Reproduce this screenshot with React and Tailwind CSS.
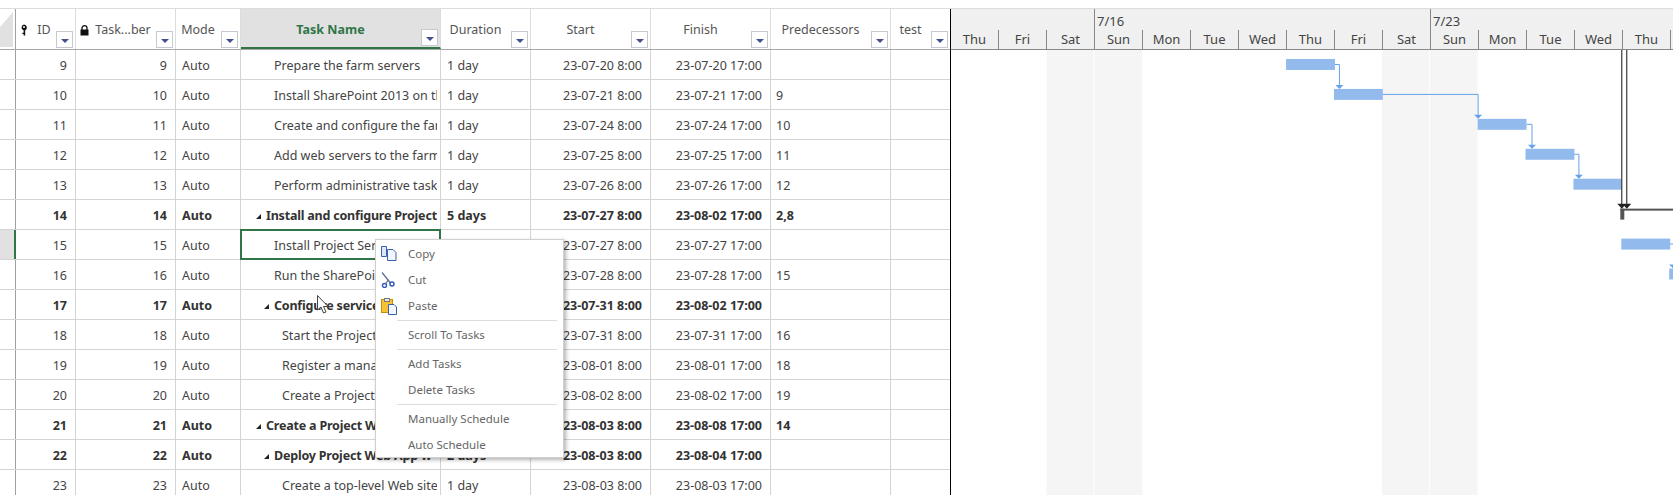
import React from 'react'

const columns = [
    { key: 'id', label: 'ID', width: 'w-[60px]', icon: 'key' },
    { key: 'num', label: 'Task...ber', width: 'w-[100px]', icon: 'lock' },
    { key: 'mode', label: 'Mode', width: 'w-[65px]' },
    { key: 'name', label: 'Task Name', width: 'w-[200px]', active: true },
    { key: 'dur', label: 'Duration', width: 'w-[90px]' },
    { key: 'start', label: 'Start', width: 'w-[120px]' },
    { key: 'finish', label: 'Finish', width: 'w-[120px]' },
    { key: 'pred', label: 'Predecessors', width: 'w-[120px]' },
    { key: 'test', label: 'test', width: 'w-[59px]', last: true },
]

const rows = [
    { id: 9, name: 'Prepare the farm servers', level: 2, dur: '1 day', start: '23-07-20 8:00', finish: '23-07-20 17:00', pred: '' },
    { id: 10, name: 'Install SharePoint 2013 on the farm', level: 2, dur: '1 day', start: '23-07-21 8:00', finish: '23-07-21 17:00', pred: '9' },
    { id: 11, name: 'Create and configure the farm', level: 2, dur: '1 day', start: '23-07-24 8:00', finish: '23-07-24 17:00', pred: '10' },
    { id: 12, name: 'Add web servers to the farm', level: 2, dur: '1 day', start: '23-07-25 8:00', finish: '23-07-25 17:00', pred: '11' },
    { id: 13, name: 'Perform administrative tasks', level: 2, dur: '1 day', start: '23-07-26 8:00', finish: '23-07-26 17:00', pred: '12' },
    { id: 14, name: 'Install and configure Project Server', level: 1, bold: true, dur: '5 days', start: '23-07-27 8:00', finish: '23-08-02 17:00', pred: '2,8' },
    { id: 15, name: 'Install Project Server', level: 2, dur: '1 day', start: '23-07-27 8:00', finish: '23-07-27 17:00', pred: '', selected: true },
    { id: 16, name: 'Run the SharePoint wizard', level: 2, dur: '1 day', start: '23-07-28 8:00', finish: '23-07-28 17:00', pred: '15' },
    { id: 17, name: 'Configure services', level: 2, bold: true, dur: '3 days', start: '23-07-31 8:00', finish: '23-08-02 17:00', pred: '' },
    { id: 18, name: 'Start the Project service', level: 3, dur: '1 day', start: '23-07-31 8:00', finish: '23-07-31 17:00', pred: '16' },
    { id: 19, name: 'Register a manager', level: 3, dur: '1 day', start: '23-08-01 8:00', finish: '23-08-01 17:00', pred: '18' },
    { id: 20, name: 'Create a Project site', level: 3, dur: '1 day', start: '23-08-02 8:00', finish: '23-08-02 17:00', pred: '19' },
    { id: 21, name: 'Create a Project Web App', level: 1, bold: true, dur: '4 days', start: '23-08-03 8:00', finish: '23-08-08 17:00', pred: '14' },
    { id: 22, name: 'Deploy Project Web App w', level: 2, bold: true, dur: '2 days', start: '23-08-03 8:00', finish: '23-08-04 17:00', pred: '' },
    { id: 23, name: 'Create a top-level Web site', level: 3, dur: '1 day', start: '23-08-03 8:00', finish: '23-08-03 17:00', pred: '' },
]

const days = ['Thu', 'Fri', 'Sat', 'Sun', 'Mon', 'Tue', 'Wed', 'Thu', 'Fri', 'Sat', 'Sun', 'Mon', 'Tue', 'Wed', 'Thu']

const FilterButton = () => (
    <div className="absolute right-[2px] bottom-[1px] w-[17px] h-[17px] bg-white border border-[#c8c8d0] flex items-center justify-center">
        <div className="mt-[2px] w-0 h-0 border-l-[4px] border-r-[4px] border-t-[4px] border-l-transparent border-r-transparent border-t-[#444f8f]" />
    </div>
)

const KeyIcon = () => (
    <svg width="8" height="12" viewBox="0 0 8 12" className="mr-[9px]">
        <path d="M4 0.5a3 3 0 0 1 1.2 5.7V11.5H3.6V10H2.4V8.8h1.2V6.3A3 3 0 0 1 4 0.5z" fill="#111" />
        <circle cx="4" cy="3" r="1" fill="#fff" />
    </svg>
)

const LockIcon = () => (
    <svg width="9" height="11" viewBox="0 0 9 11" className="mr-[6px]">
        <path d="M2 5V3.2a2.5 2.5 0 0 1 5 0V5" fill="none" stroke="#111" strokeWidth="1.3" />
        <rect x="0.5" y="4.5" width="8" height="6" fill="#111" />
    </svg>
)

const HeaderCell = ({ col }) => (
    <div className={`${col.width} relative shrink-0 h-full flex items-center justify-center pr-5 ${col.last ? '' : 'border-r border-[#dcdcdc]'} ${col.active ? 'pt-[4px] bg-[#e1e1e1] border-b-2 border-b-[#2f7548] text-[#2f7548] font-bold' : 'pt-[2px] text-[#555]'}`}>
        {col.icon === 'key' && <KeyIcon />}
        {col.icon === 'lock' && <LockIcon />}
        <span className="whitespace-nowrap">{col.label}</span>
        <FilterButton />
    </div>
)

const Row = ({ row }) => {
    const weight = row.bold ? 'font-bold text-[#333]' : 'text-[#444]'
    const indent = row.level === 1 ? 'pl-[25px]' : row.level === 2 ? 'pl-[33px]' : 'pl-[41px]'
    const nameCell = row.selected
        ? 'w-[201px] border-2 border-[#2f7548] -my-px -ml-px pl-[32px] pr-[3px]'
        : `w-[200px] border-r border-[#d4d4d4] pr-[3px] ${indent}`
    return (
        <div className={`flex h-[30px] shrink-0 border-b border-[#d4d4d4] ${weight}`}>
            <div className={`w-[16px] shrink-0 ${row.selected ? 'bg-[#e1e1e1] border-r-2 border-r-[#2f7548]' : 'border-r border-[#a0a0a0]'}`} />
            <div className="w-[60px] shrink-0 border-r border-[#d4d4d4] pt-[4px] flex items-center justify-end pr-2">{row.id}</div>
            <div className="w-[100px] shrink-0 border-r border-[#d4d4d4] pt-[4px] flex items-center justify-end pr-2">{row.id}</div>
            <div className="w-[65px] shrink-0 border-r border-[#d4d4d4] pt-[4px] flex items-center pl-[6px]">Auto</div>
            <div className={`shrink-0 pt-[4px] flex items-center ${nameCell}`}>
                {row.bold && <div className="shrink-0 ml-[-10px] mr-[5px] w-0 h-0 border-l-[5px] border-b-[5px] border-l-transparent border-b-[#222]" />}
                <span className={`block min-w-0 overflow-hidden whitespace-nowrap ${row.bold ? 'tracking-[-0.2px]' : ''}`}>{row.name}</span>
            </div>
            <div className="w-[90px] shrink-0 border-r border-[#d4d4d4] pt-[4px] flex items-center pl-[6px]">{row.dur}</div>
            <div className="w-[120px] shrink-0 border-r border-[#d4d4d4] pt-[4px] flex items-center justify-end pr-2">{row.start}</div>
            <div className="w-[120px] shrink-0 border-r border-[#d4d4d4] pt-[4px] flex items-center justify-end pr-2">{row.finish}</div>
            <div className="w-[120px] shrink-0 border-r border-[#d4d4d4] pt-[4px] flex items-center pl-[5px]">{row.pred}</div>
            <div className="w-[59px] shrink-0" />
        </div>
    )
}

const bars = [
    [335, 9, 49], [383, 39, 49], [527, 69, 49], [575, 99, 49], [623, 129, 48], [671, 189, 49], [719, 219, 10],
]

const links = [
    'M384 14.5H388.5V38', 'M432 44.5H527.5V68', 'M576 74.5H581.5V98', 'M624 104.5H628.5V128', 'M720 194.5H724',
]

const arrows = [[388.5, 38], [527.5, 68], [581.5, 98], [628.5, 128], [723, 218]]

const GanttBody = () => (
    <svg width="723" height="446" viewBox="0 0 723 446" className="block">
        <rect x="95" y="0" width="47" height="446" fill="#f5f5f5" />
        <rect x="143" y="0" width="48" height="446" fill="#f5f5f5" />
        <rect x="431" y="0" width="47" height="446" fill="#f5f5f5" />
        <rect x="479" y="0" width="48" height="446" fill="#f5f5f5" />
        {bars.map(([x, y, w]) => <rect key={x} x={x} y={y} width={w} height="11" fill="#92baed" />)}
        {links.map((d) => <path key={d} d={d} fill="none" stroke="#63a1e8" strokeWidth="1" />)}
        {arrows.map(([x, y]) => <path key={x} d={`M${x - 4} ${y - 3}H${x + 4}L${x} ${y + 1}z`} fill="#63a1e8" />)}
        <path d="M671.5 0V156M676.5 0V156" stroke="#111" strokeWidth="1" fill="none" />
        <path d="M667 154H676L671.5 159zM672 154H681L676.5 159z" fill="#222" />
        <rect x="670" y="159" width="4" height="11" fill="#555" />
        <rect x="670" y="159" width="53" height="2" fill="#555" />
    </svg>
)

const CopyIcon = () => (
    <svg width="16" height="15" viewBox="0 0 16 15">
        <path d="M0.5 0.5H5.5V10.5H0.5z" fill="#dbe6f7" stroke="#3b62a8" />
        <path d="M6.5 3.5H12L15 6.5V14.5H6.5z" fill="#f2f6fc" stroke="#3b62a8" />
    </svg>
)

const CutIcon = () => (
    <svg width="14" height="16" viewBox="0 0 14 16">
        <path d="M1 0.5L9.5 11M7.5 7.5L4.5 12" stroke="#5f6f90" strokeWidth="1.3" fill="none" />
        <circle cx="3.5" cy="13.5" r="2" fill="none" stroke="#2f56b8" strokeWidth="1.4" />
        <circle cx="11" cy="12" r="2" fill="none" stroke="#2f56b8" strokeWidth="1.4" />
    </svg>
)

const PasteIcon = () => (
    <svg width="17" height="17" viewBox="0 0 17 17">
        <rect x="0.5" y="1.5" width="11" height="13" fill="#f6c236" stroke="#c98e10" />
        <rect x="3.5" y="0.5" width="5" height="3" fill="#e8e8e8" stroke="#777" />
        <path d="M7.5 6.5H13L15.5 9V16.5H7.5z" fill="#f3f6fb" stroke="#3b62a8" />
    </svg>
)

const MenuItem = ({ label, icon }) => (
    <div className="h-[26px] flex items-center relative pl-[32px] whitespace-nowrap">
        {icon && <div className="absolute left-[5px] top-[5px]">{icon}</div>}
        {label}
    </div>
)

const MenuLine = () => <div className="h-px bg-[#dcdcdc] ml-[21px] mr-[6px] my-[1px]" />

const ContextMenu = () => (
    <div className="absolute left-[375px] top-[239px] w-[189px] h-[219px] bg-white border border-[#d0d0d0] shadow-[2px_2px_4px_rgba(0,0,0,0.3)] text-[11.5px] text-[#666] pt-[1px]">
        <MenuItem label="Copy" icon={<CopyIcon />} />
        <MenuItem label="Cut" icon={<CutIcon />} />
        <MenuItem label="Paste" icon={<PasteIcon />} />
        <MenuLine />
        <MenuItem label="Scroll To Tasks" />
        <MenuLine />
        <MenuItem label="Add Tasks" />
        <MenuItem label="Delete Tasks" />
        <MenuLine />
        <MenuItem label="Manually Schedule" />
        <MenuItem label="Auto Schedule" />
    </div>
)

const Cursor = () => (
    <svg width="14" height="20" viewBox="0 0 14 20" className="absolute left-[317px] top-[295px]">
        <path d="M0.5 0.5V15L4 12L6.5 18L9 17L6.5 11.5H11z" fill="#fff" stroke="#444" strokeWidth="1" />
    </svg>
)

const App = () => {
    return (
        <div className="relative w-[1673px] h-[495px] overflow-hidden bg-white pt-2 text-[12.5px]" style={{ fontFamily: '"Noto Sans", sans-serif' }}>
            <div className="flex h-[487px] border-t border-[#dcdcdc]">
                <div className="w-[951px] shrink-0 border-r border-black flex flex-col">
                    <div className="flex h-[41px] shrink-0 border-b border-[#a8a8a8]">
                        <div className="w-[16px] shrink-0 border-r border-[#a0a0a0] pt-[3px]">
                            <svg width="13" height="35" viewBox="0 0 13 35" className="block">
                                <path d="M13 0V35H0V15z" fill="#e1e1e1" />
                            </svg>
                        </div>
                        {columns.map((col) => <HeaderCell key={col.key} col={col} />)}
                    </div>
                    {rows.map((row) => <Row key={row.id} row={row} />)}
                </div>
                <div className="flex-1 flex flex-col min-w-0">
                    <div className="h-[41px] shrink-0 bg-[#f0f0f0] border-b border-[#888] relative flex items-end text-[13px] text-[#444]">
                        {days.map((day, i) => (
                            <div key={i} className="w-[48px] shrink-0 h-[19px] border-r border-[#888] flex items-center justify-center">{day}</div>
                        ))}
                        <div className="absolute left-[143px] top-0 h-[22px] border-l border-[#888] pl-[2px] pt-[3px]">7/16</div>
                        <div className="absolute left-[479px] top-0 h-[22px] border-l border-[#888] pl-[2px] pt-[3px]">7/23</div>
                    </div>
                    <GanttBody />
                </div>
            </div>
            <ContextMenu />
            <Cursor />
        </div>
    )
}

export default App
